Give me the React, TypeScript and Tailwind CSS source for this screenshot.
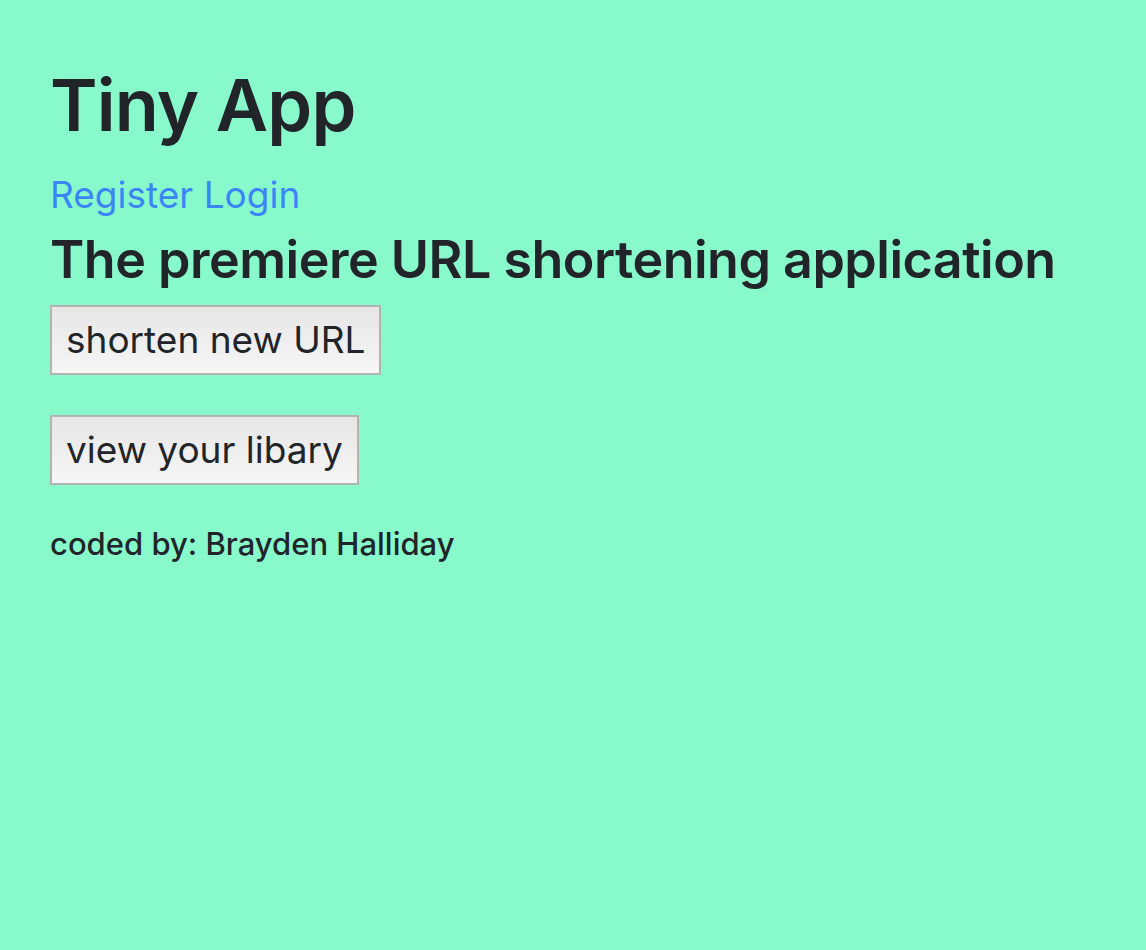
export default function App() {
  return (
    <div className="min-h-[950px] bg-[#88f9cb] px-[50px] pt-[59px] text-[#212529] font-['Inter','Liberation_Sans',sans-serif]">
      <h1 className="text-[72px] leading-[92px] font-semibold tracking-[-0.8px]">Tiny App</h1>
      <nav className="mt-[22px] text-[37px] leading-[44px] text-[#3b86f7]">
        <a href="#">Register</a> <a href="#">Login</a>
      </nav>
      <h2 className="mt-[11px] text-[52px] leading-[64px] font-semibold tracking-[-0.5px]">
        The premiere URL shortening application
      </h2>
      <div className="mt-[13px] flex flex-col items-start gap-[40px]">
        <button className="h-[70px] border-2 border-[#b3b3b3] bg-gradient-to-b from-[#e6e6e6] to-[#f6f6f6] px-[14px] text-[37px]">
          shorten new URL
        </button>
        <button className="h-[70px] border-2 border-[#b3b3b3] bg-gradient-to-b from-[#e6e6e6] to-[#f6f6f6] px-[14px] text-[37px]">
          view your libary
        </button>
      </div>
      <p className="mt-[40px] text-[31px] leading-[38px] font-medium">coded by: Brayden Halliday</p>
    </div>
  );
}
